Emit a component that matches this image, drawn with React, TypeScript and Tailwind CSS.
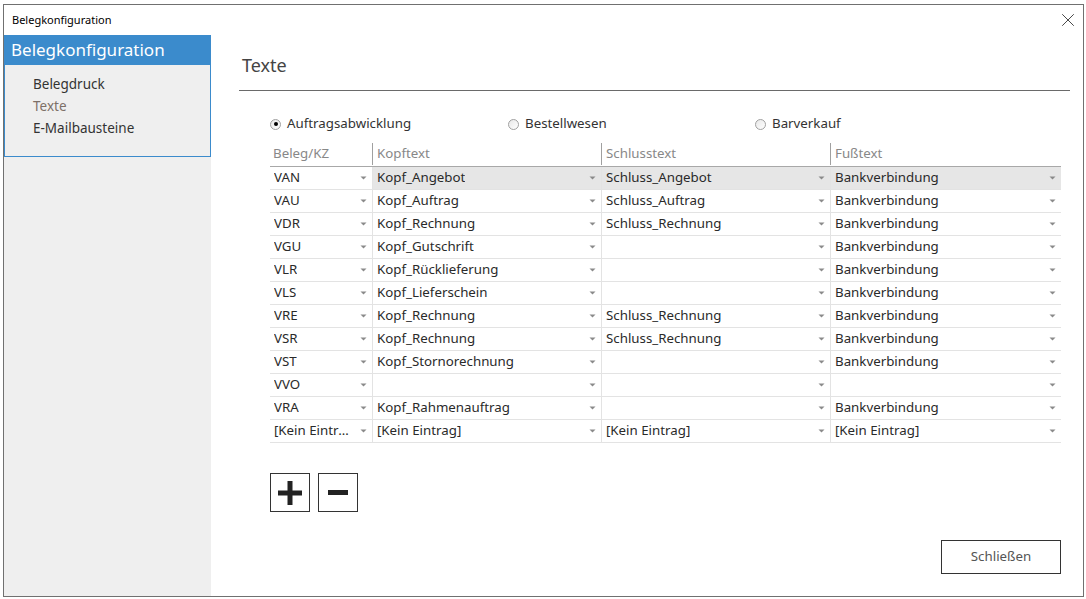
import { X } from 'lucide-react'

const rows: [string, string, string, string][] = [
  ['VAN', 'Kopf_Angebot', 'Schluss_Angebot', 'Bankverbindung'],
  ['VAU', 'Kopf_Auftrag', 'Schluss_Auftrag', 'Bankverbindung'],
  ['VDR', 'Kopf_Rechnung', 'Schluss_Rechnung', 'Bankverbindung'],
  ['VGU', 'Kopf_Gutschrift', '', 'Bankverbindung'],
  ['VLR', 'Kopf_Rücklieferung', '', 'Bankverbindung'],
  ['VLS', 'Kopf_Lieferschein', '', 'Bankverbindung'],
  ['VRE', 'Kopf_Rechnung', 'Schluss_Rechnung', 'Bankverbindung'],
  ['VSR', 'Kopf_Rechnung', 'Schluss_Rechnung', 'Bankverbindung'],
  ['VST', 'Kopf_Stornorechnung', '', 'Bankverbindung'],
  ['VVO', '', '', ''],
  ['VRA', 'Kopf_Rahmenauftrag', '', 'Bankverbindung'],
  ['[Kein Eintrag]', '[Kein Eintrag]', '[Kein Eintrag]', '[Kein Eintrag]'],
]

const font = { fontFamily: '"Noto Sans", sans-serif' }

function Caret() {
  return (
    <svg width="7" height="4" viewBox="0 0 7 4" className="shrink-0">
      <path d="M0.5 0.5 L6.5 0.5 L3.5 3.5 Z" fill="#8a8a8a" />
    </svg>
  )
}

function Radio({ checked, label }: { checked?: boolean; label: string }) {
  return (
    <div className="flex items-center gap-[6px]">
      <span className="w-[11px] h-[11px] rounded-full border border-[#a0a0a0] bg-gradient-to-br from-[#e8e8e8] to-white flex items-center justify-center">
        {checked && <span className="w-[4px] h-[4px] rounded-full bg-black" />}
      </span>
      <span className="text-[13.3px] text-[#333]">{label}</span>
    </div>
  )
}

function Cell({ value, first, hl }: { value: string; first?: boolean; hl?: boolean }) {
  return (
    <div
      className={`h-[23px] flex items-center justify-between pl-[4px] pr-[5px] border-b border-[#e3e3e3]
        ${first ? '' : 'border-l'} ${hl ? 'bg-[#e6e6e6]' : 'bg-white'}`}
    >
      {/* first column is narrow, long values get an ellipsis like the original grid */}
      <span className={`text-[13.3px] text-[#2a2a2a] truncate ${first ? 'max-w-[80px]' : ''}`}>{value}</span>
      <Caret />
    </div>
  )
}

export default function App() {
  return (
    <div className="w-[1086px] h-[599px] bg-white pt-[4px] pl-[3px]" style={font}>
      <div className="w-[1081px] h-[593px] border border-[#707070] flex flex-col">
        {/* title bar */}
        <div className="h-[30px] flex items-center justify-between pl-[8px] pr-[4px] shrink-0">
          <span className="text-[11px] text-black">Belegkonfiguration</span>
          <X size={22} strokeWidth={0.9} className="text-[#222]" />
        </div>

        <div className="flex flex-1 min-h-0">
          {/* side nav */}
          <div className="w-[207px] bg-[#efefef] shrink-0">
            <div className="border border-[#3b8bcc] border-t-0 h-[122px]">
              <div className="h-[30px] bg-[#3b8bcc] flex items-center pl-[6px]">
                <span className="text-[17px] text-white">Belegkonfiguration</span>
              </div>
              <div className="pl-[28px] pt-[8px] flex flex-col">
                <span className="text-[13.5px] leading-[22px] text-[#333]">Belegdruck</span>
                <span className="text-[13.5px] leading-[22px] text-[#7d7068]">Texte</span>
                <span className="text-[13.5px] leading-[22px] text-[#333]">E-Mailbausteine</span>
              </div>
            </div>
          </div>

          {/* content */}
          <div className="flex-1 flex flex-col pl-[28px] pr-[14px]">
            <div className="h-[56px] border-b border-[#6a6a6a] flex items-end pb-[11px] pl-[3px]">
              <span className="text-[18px] text-[#444]">Texte</span>
            </div>

            <div className="pl-[31px] pr-[9px] flex-1 flex flex-col">
              <div className="flex items-center h-[20px] mt-[23px]">
                <div className="w-[238px]"><Radio checked label="Auftragsabwicklung" /></div>
                <div className="w-[247px]"><Radio label="Bestellwesen" /></div>
                <Radio label="Barverkauf" />
              </div>

              <div className="mt-[9px] w-[791px]">
                <div className="grid grid-cols-[102px_229px_229px_231px] h-[24px] border-b border-[#a8a8a8]">
                  {['Beleg/KZ', 'Kopftext', 'Schlusstext', 'Fußtext'].map((h, i) => (
                    <div key={h} className="flex items-center pb-[2px]">
                      {i > 0 && <span className="w-px h-[22px] bg-[#a0a0a0] mr-[4px]" />}
                      <span className={`text-[13.3px] text-[#888] ${i === 0 ? 'pl-[3px]' : ''}`}>{h}</span>
                    </div>
                  ))}
                </div>
                {rows.map((r, ri) => (
                  <div key={ri} className="grid grid-cols-[102px_229px_229px_231px]">
                    {r.map((v, ci) => (
                      <Cell key={ci} value={v} first={ci === 0} hl={ri === 0 && ci > 0} />
                    ))}
                  </div>
                ))}
              </div>

              <div className="flex gap-[8px] mt-[30px]">
                <button className="w-[40px] h-[39px] border border-[#333] flex items-center justify-center">
                  <svg width="24" height="24" viewBox="0 0 24 24">
                    <path d="M9.5 0h5v9.5H24v5h-9.5V24h-5v-9.5H0v-5h9.5z" fill="#222" />
                  </svg>
                </button>
                <button className="w-[40px] h-[39px] border border-[#333] flex items-center justify-center">
                  <svg width="20" height="5" viewBox="0 0 20 5">
                    <rect width="20" height="5" fill="#222" />
                  </svg>
                </button>
              </div>

              <div className="flex justify-end mt-[28px]">
                <button className="w-[120px] h-[34px] border border-[#333] text-[13.3px] text-[#555] bg-white">
                  Schließen
                </button>
              </div>
            </div>
          </div>
        </div>
      </div>
    </div>
  )
}
